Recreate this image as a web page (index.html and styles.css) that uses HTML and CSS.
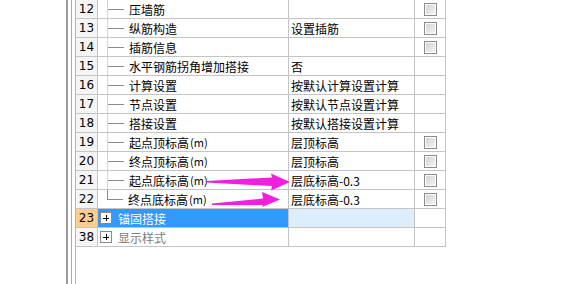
FILE: index.html
```html
<!DOCTYPE html>
<html>
<head>
    <meta charset="UTF-8">
    <title>属性编辑</title>
    <link rel="stylesheet" href="styles.css">
</head>
<body>
    <div class="app">
        <div class="side"></div>
        <div class="split">
            <div class="pane">
                <div class="grid">
                    <div class="row"><div class="num">12</div><div class="name"><span class="branch"></span>压墙筋</div><div class="val"></div><div class="chk"><span class="box"></span></div></div>
                    <div class="row"><div class="num">13</div><div class="name"><span class="branch"></span>纵筋构造</div><div class="val">设置插筋</div><div class="chk"><span class="box"></span></div></div>
                    <div class="row"><div class="num">14</div><div class="name"><span class="branch"></span>插筋信息</div><div class="val"></div><div class="chk"><span class="box"></span></div></div>
                    <div class="row"><div class="num">15</div><div class="name"><span class="branch"></span>水平钢筋拐角增加搭接</div><div class="val">否</div><div class="chk"></div></div>
                    <div class="row"><div class="num">16</div><div class="name"><span class="branch"></span>计算设置</div><div class="val">按默认计算设置计算</div><div class="chk"></div></div>
                    <div class="row"><div class="num">17</div><div class="name"><span class="branch"></span>节点设置</div><div class="val">按默认节点设置计算</div><div class="chk"></div></div>
                    <div class="row"><div class="num">18</div><div class="name"><span class="branch"></span>搭接设置</div><div class="val">按默认搭接设置计算</div><div class="chk"></div></div>
                    <div class="row"><div class="num">19</div><div class="name"><span class="branch"></span>起点顶标高<span class="unit">(m)</span></div><div class="val">层顶标高</div><div class="chk"><span class="box"></span></div></div>
                    <div class="row"><div class="num">20</div><div class="name"><span class="branch"></span>终点顶标高<span class="unit">(m)</span></div><div class="val">层顶标高</div><div class="chk"><span class="box"></span></div></div>
                    <div class="row"><div class="num">21</div><div class="name"><span class="branch"></span>起点底标高<span class="unit">(m)</span></div><div class="val">层底标高-0.3</div><div class="chk"><span class="box"></span></div></div>
                    <div class="row"><div class="num">22</div><div class="name"><span class="branch last"></span>终点底标高<span class="unit">(m)</span></div><div class="val">层底标高-0.3</div><div class="chk"><span class="box"></span></div></div>
                    <div class="row selected"><div class="num">23</div><div class="name"><span class="expander"></span>锚固搭接</div><div class="val"></div><div class="chk"></div></div>
                    <div class="row muted"><div class="num">38</div><div class="name"><span class="expander"></span>显示样式</div><div class="val"></div><div class="chk"></div></div>
                </div>
            </div>
        </div>
    </div>

    <svg class="arrows" width="578" height="284" viewBox="0 0 578 284">
        <polygon points="206,181 272,177.5 271,173.5 290,182 271,190.5 272,186 206,182.5" fill="#f21ee0"/>
        <polygon points="212,203.5 263,198.5 262,192 280,199.5 262,207 263,205 212,205" fill="#f21ee0"/>
    </svg>
</body>
</html>
```

FILE: styles.css
```css
body {
    margin: 0;
    background-color: #fff;
    font-family: "Noto Sans CJK SC", "DejaVu Sans", sans-serif;
    font-size: 12px;
    color: #000;
}

.app {
    display: flex;
    height: 284px;
}

.side {
    width: 66px;
}

.split {
    border-left: 2px solid #9c9c9c;
    padding-left: 3px;
}

.pane {
    height: 100%;
    border-left: 1px solid #a8a8a8;
    padding-left: 3px;
}

.grid {
    height: 100%;
    border-left: 1px solid #b4b4b4;
}

.row {
    display: grid;
    grid-template-columns: 22px 191px 126px 31px;
    height: 19px;
}

.row > div {
    box-sizing: border-box;
    border-right: 1px solid #c4c4c4;
    border-bottom: 1px solid #c4c4c4;
    display: flex;
    align-items: center;
    white-space: nowrap;
    overflow: hidden;
}

.num {
    justify-content: center;
    background-color: #f5f5f5;
    font-family: "DejaVu Sans", sans-serif;
    font-size: 12px;
}

.name {
    padding-left: 9px;
}

.unit {
    font-size: 11px;
    margin-left: 1px;
}

.branch {
    align-self: stretch;
    width: 16px;
    margin-right: 5px;
    border-left: 1px solid #d4d4d4;
    background: linear-gradient(#8c8c8c, #8c8c8c) no-repeat 0 50% / 100% 1px;
}

.branch.last {
    border-left: none;
    background:
        linear-gradient(#8c8c8c, #8c8c8c) no-repeat 0 50% / 100% 1px,
        linear-gradient(#8c8c8c, #8c8c8c) no-repeat 0 0 / 1px 50%;
}

.val {
    padding-left: 2px;
}

.chk {
    justify-content: center;
}

.box {
    width: 11px;
    height: 11px;
    border: 1px solid #8a8a8a;
    box-shadow: inset 0 0 0 1px #fff;
    background: linear-gradient(135deg, #d0d0d0, #f6f6f6);
}

.row .expander {
    width: 10px;
    height: 10px;
    margin-left: -7px;
    margin-right: 6px;
    border: 1px solid #8a8a8a;
    background:
        linear-gradient(#000, #000) no-repeat 50% 50% / 6px 1px,
        linear-gradient(#000, #000) no-repeat 50% 50% / 1px 6px,
        #fff;
}

.selected .num {
    background-color: #ffcd8c;
}

.selected .name {
    background-color: #3399ff;
    color: #fff;
}

.selected .val {
    background-color: #ddedfc;
}

.muted .name {
    color: #7c7c7c;
}

.arrows {
    position: absolute;
    left: 0;
    top: 0;
    pointer-events: none;
}
```
